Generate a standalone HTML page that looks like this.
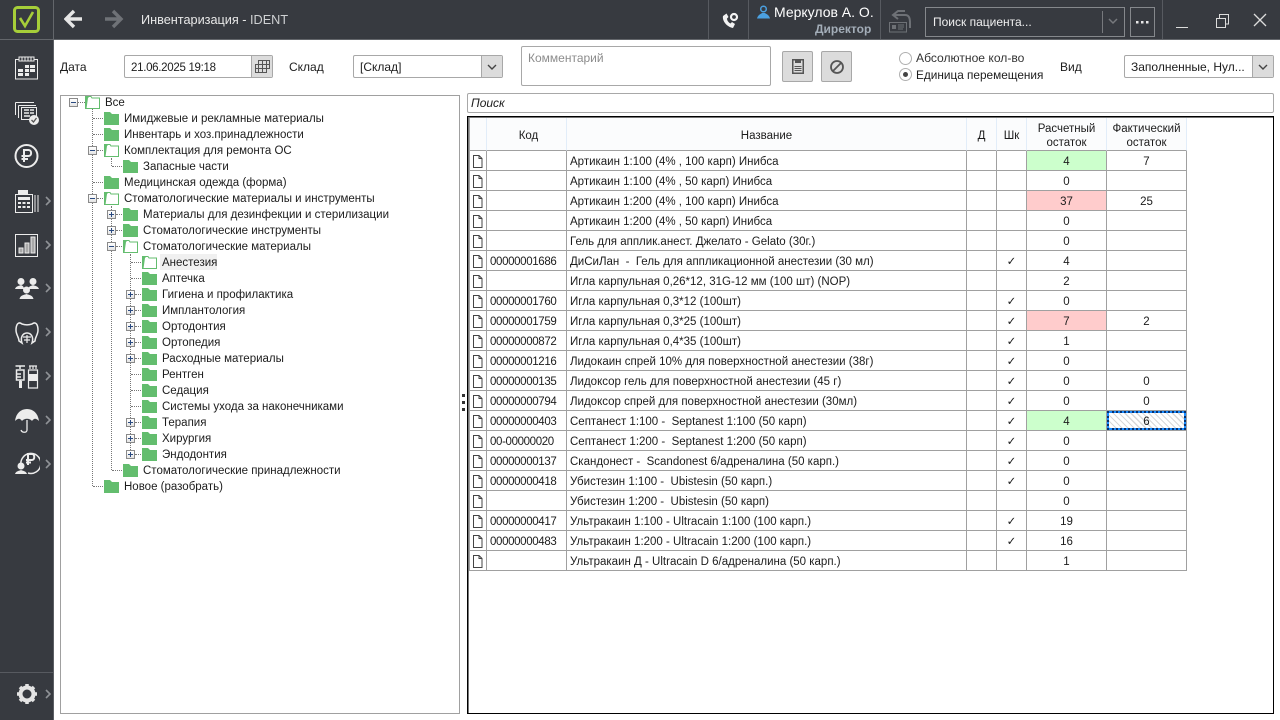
<!DOCTYPE html>
<html><head><meta charset="utf-8"><style>
html,body{margin:0;padding:0;background:#fff}
body{width:1280px;height:720px;overflow:hidden;position:relative;font:11.5px "Liberation Sans",sans-serif;color:#1c1c1c}
.a{position:absolute}
.t{position:absolute;white-space:pre;line-height:16px}
.f{font-size:12px}
#top{left:0;top:0;width:1280px;height:39px;background:#373a40;border-bottom:1px solid #63666b}
#side{left:0;top:40px;width:53px;height:680px;background:#373a40;border-right:1px solid #5c5f64}
.v{position:absolute;top:0;width:1px;height:39px;background:#575a60}
.box{position:absolute;box-sizing:border-box;border:1px solid #a8a8a8;border-radius:2px;background:#fff}
.btn{position:absolute;box-sizing:border-box;background:#dcdcdc;border-left:1px solid #a8a8a8}
.tb{position:absolute;box-sizing:border-box;border:1px solid #a8a8a8;border-radius:2px;background:#dcdcdc;width:31px;height:31px;top:51px}
.ex{position:absolute;width:9px;height:9px;box-sizing:border-box;border:1px solid #8a8a8a;background:linear-gradient(#fff,#e4e4e4)}
.ex:before{content:"";position:absolute;left:1px;top:3px;width:5px;height:1px;background:#2a4a80}
.ex.p:after{content:"";position:absolute;left:3px;top:1px;width:1px;height:5px;background:#2a4a80}
.h{position:absolute;height:1px;border-top:1px dotted #777}
.vl{position:absolute;width:1px;border-left:1px dotted #777}
table{position:absolute;left:469px;top:118px;border-collapse:separate;border-spacing:0;table-layout:fixed;width:718px;border-left:1px solid #a0a0a0}
td,th{box-sizing:border-box;border-right:1px solid #a0a0a0;border-bottom:1px solid #a0a0a0;padding:2px 0 0;height:20px;white-space:pre;overflow:hidden;font-weight:normal;line-height:14px}
th{height:33px;background:#fbfcfd;border-right:1px solid #e2edf9;text-align:center;padding-top:3px}
th.kh{padding-left:4px}
td.n{padding-left:3px}
td.k{letter-spacing:-.36px}
td.c{text-align:center}
td.ic{padding:0}
td.ic svg{display:block;margin:1px 0 0 2px}
td.g{background:#ccffcc}
td.r{background:#ffcccc}
td.s{position:relative;background:repeating-linear-gradient(45deg,#fff 0 3px,#d8d8d8 3px 4.2px)}
td.s:before{content:"";position:absolute;left:0;top:0;right:0;bottom:0;border:2px solid #1a8cff}
td.s:after{content:"";position:absolute;left:0;top:0;right:0;bottom:0;border:2px dotted #06306e}
</style></head><body>
<svg width="0" height="0" style="position:absolute"><defs>
<symbol id="fc" viewBox="0 0 15 13"><path d="M0 13V0H6L8 2H15V13Z" fill="#63bd6e"/></symbol>
<symbol id="fo" viewBox="0 0 15 13"><path d="M0.5 12.5V0.5H6L7 2H14.5V12.5Z" fill="#fff" stroke="#63bd6e"/><path d="M0 13V0H5L3 2 1.5 12.5Z" fill="#63bd6e"/></symbol>
<symbol id="doc" viewBox="0 0 11 13"><path d="M1.5 .5H7L10 3.5V12.5H1.5ZM7 .5V3.5H10" fill="#fff" stroke="#444"/></symbol>
<symbol id="chev" viewBox="0 0 6 10"><path d="M1 1L5 5 1 9" fill="none" stroke="#8f9296" stroke-width="1.6"/></symbol>
</defs></svg>

<div class="a" id="top"></div>
<div class="a" id="side"></div>
<div class="v" style="left:53px;background:#63666b"></div>
<svg class="a" style="left:13px;top:6px" width="27" height="27"><rect x="1.5" y="1.5" width="24" height="24" rx="3" fill="none" stroke="#a6ce39" stroke-width="3"/><path d="M7 12L12 20 20 6" fill="none" stroke="#a6ce39" stroke-width="2.6"/></svg>
<svg class="a" style="left:64px;top:9px" width="60" height="20"><path d="M2 10H18M10 2L2 10 10 18" fill="none" stroke="#e6e6e6" stroke-width="3.4"/><path d="M41 10H57M49 2L57 10 49 18" fill="none" stroke="#6f7277" stroke-width="3.4"/></svg>
<div class="t" style="left:141px;top:12px;font-size:12.7px;color:#e8e8e8">Инвентаризация - <span style="color:#cfd1d3">IDENT</span></div>
<div class="v" style="left:708px"></div><div class="v" style="left:748px"></div><div class="v" style="left:880px"></div><div class="v" style="left:1162px"></div>
<svg class="a" style="left:721px;top:11px" width="20" height="18"><path d="M2 5C1 10 6 16 12 17L14 13 11 11 9.500 12.500C7.500 11.500 6 9.500 6 7.500L7.500 6 5.500 2.500Z" fill="#f2f2f2"/><circle cx="13" cy="6" r="3" fill="none" stroke="#f2f2f2" stroke-width="2.200"/></svg>
<svg class="a" style="left:757px;top:5px" width="13" height="14"><circle cx="6.500" cy="4" r="2.800" fill="none" stroke="#4ba0e0" stroke-width="1.500"/><path d="M0 13.500C1 9.500 4 9 5 8H8C9 9 12 9.500 13 13.500Z" fill="#4ba0e0"/></svg>
<div class="t" style="left:774px;top:4px;font-size:14px;color:#fff">Меркулов А. О.</div>
<div class="t" style="left:815px;top:21px;font-size:12px;font-weight:bold;color:#a3adb8">Директор</div>
<svg class="a" style="left:889px;top:9px" width="24" height="24" fill="none" stroke="#6e7176"><path d="M16 2H9L4 6 9 10M5 6H16C20 6 21 9 21 14V19" stroke-width="2"/><rect x=".5" y="13.500" width="17" height="9.500" fill="#373a40"/><rect x="3" y="16" width="4" height="4" fill="#6e7176" stroke="none"/><path d="M9 16H15M9 18H15M9 20H14"/></svg>
<div class="a" style="left:925px;top:7px;width:200px;height:30px;box-sizing:border-box;border:1px solid #85888c"></div>
<div class="t" style="left:933px;top:14px;font-size:12px;color:#f0f0f0">Поиск пациента...</div>
<div class="a" style="left:1102px;top:11px;width:1px;height:22px;background:#77797d"></div>
<svg class="a" style="left:1108px;top:18px" width="10" height="7"><path d="M1 1L5 5 9 1" fill="none" stroke="#77797d" stroke-width="1.500"/></svg>
<div class="a" style="left:1130px;top:7px;width:25px;height:30px;box-sizing:border-box;border:1px solid #85888c"></div>
<svg class="a" style="left:1135px;top:20px" width="15" height="4" fill="#e8e8e8"><rect x="1" y="1" width="2.500" height="2.500"/><rect x="6" y="1" width="2.500" height="2.500"/><rect x="11" y="1" width="2.500" height="2.500"/></svg>
<svg class="a" style="left:1175px;top:12px" width="95" height="18" fill="none" stroke="#dcdcdc"><path d="M1 15.500H13"/><path d="M41.500 6.500H50.500V15.500H41.500ZM44.500 6V2.500H53.500V12H51"/><path d="M79 2L91 14M91 2L79 14" stroke-width="1.300"/></svg>

<div class="a" style="left:0;top:672px;width:53px;height:1px;background:#575a60"></div>
<svg class="a" style="left:14px;top:55px" width="26" height="425" fill="none" stroke="#ececec" stroke-width="1">
<g><rect x="1.500" y="4.500" width="22" height="19.500"/><path d="M5 2H20V6H5Z" fill="#373a40" stroke="#ececec"/><path d="M8 2V6M11 2V6M14 2V6M17 2V6"/><path d="M11 10H15V13H11ZM16 10H21V13H16ZM4 14H9V17H4ZM11 14H15V17H11ZM16 14H21V17H16ZM4 18H9V21H4ZM11 18H15V21H11Z" fill="#ececec" stroke="none"/></g>
<g transform="translate(0,46)"><path d="M1.500 1.500H20M1.500 1.500V14M4.500 4.500H22M4.500 4.500V17"/><rect x="7.500" y="6.500" width="15" height="12" fill="#373a40"/><path d="M10 9H15M16 9H20M10 12H15M16 12H20M10 15H16" stroke-width="1.500"/><circle cx="20" cy="19" r="5" fill="#ececec" stroke="none"/><path d="M17.500 19L19.500 21 22.500 17" stroke="#555" stroke-width="1.300"/></g>
<g transform="translate(0,89)"><circle cx="12.500" cy="12" r="11" stroke-width="2"/><path d="M10 18V6H14.500C18 6 18 12 14.500 12H7.500M7.500 15H14" stroke-width="2"/></g>
<g transform="translate(0,135)"><rect x="1.500" y="4.500" width="17" height="18"/><path d="M4 0H14V4H4Z" fill="#ececec" stroke="none"/><path d="M4 7H16V10H4Z" stroke="none" fill="#ececec"/><path d="M4 12H7V14H4ZM8.500 12H11.500V14H8.500ZM13 12H16V14H13ZM4 16H7V18H4ZM8.500 16H11.500V18H8.500ZM13 16H16V18H13Z" stroke="none" fill="#ececec"/><path d="M21 5V22M24 5V22"/></g>
<g transform="translate(0,179)"><rect x="1.500" y=".5" width="22" height="22"/><path d="M5 14H9V19H5ZM11 9H15V19H11ZM17 3H21V19H17Z" fill="#a8a8a8" stroke="#ececec"/></g>
<g transform="translate(0,222)" fill="#ececec" stroke="none"><circle cx="7" cy="4.500" r="3.500"/><path d="M1 12C2 9 5 9 7 8 9 9 10 10 10 12Z"/><circle cx="19" cy="4.500" r="3.500"/><path d="M14 12C15 9 17 9 19 8 21 9 24 9 25 12Z"/><circle cx="12.500" cy="13" r="3.500"/><path d="M5.500 22C6.500 18 10 18 12.500 17 15 18 18.500 18 19.500 22Z"/></g>
<g transform="translate(0,266)" stroke-width="1.500"><path d="M8 3C4 0 2 4 2 9 2 14 5 16 5 20L8 22C6 16 9 12 13 12 17 12 20 16 18 22L21 20C21 16 24 14 24 9 24 4 22 0 18 3 15 4 11 4 8 3Z"/><path d="M9 16H17M10 19H16M13 14V22" stroke-width="1.200"/></g>
<g transform="translate(0,310)"><path d="M1.500 1H11M6 1V4M2.500 5H10V15H2.500ZM2.500 9H7M2.500 12H7M6.500 15V19" stroke-width="1.500"/><path d="M5 16H8V23H5Z" fill="#ececec" stroke="none"/><path d="M15 1H23M16 1V4M19 1V4M22 1V4M14.500 5H23.500V23H14.500Z" stroke-width="1.200"/><rect x="14" y="9" width="10" height="7" fill="#ececec" stroke="none"/></g>
<g transform="translate(0,352)"><path d="M1 14C2 6 7 2 13 2 19 2 24 6 25 14 22 11 20 11 18 14 16 11 10 11 8 14 6 11 4 11 1 14Z" fill="#ececec" stroke="none"/><path d="M13 13V23C13 26 8 26 7 23" stroke-width="1.300"/></g>
<g transform="translate(0,396)"><path d="M7 14A10 10 0 1 1 14 22" stroke-width="1.500"/><path d="M14 14V3H18C21 3 21 9 18 9H12M12 11.500H17" stroke-width="2"/><circle cx="7" cy="15" r="3.500" fill="#ececec" stroke="none"/><path d="M1 23C2 20 5 20 7 19 9 20 12 20 13 23Z" fill="#ececec" stroke="none"/></g>
</svg>
<svg class="a" style="left:45px;top:196px" width="6" height="10"><use href="#chev"/></svg>
<svg class="a" style="left:45px;top:240px" width="6" height="10"><use href="#chev"/></svg>
<svg class="a" style="left:45px;top:283px" width="6" height="10"><use href="#chev"/></svg>
<svg class="a" style="left:45px;top:327px" width="6" height="10"><use href="#chev"/></svg>
<svg class="a" style="left:45px;top:371px" width="6" height="10"><use href="#chev"/></svg>
<svg class="a" style="left:45px;top:415px" width="6" height="10"><use href="#chev"/></svg>
<svg class="a" style="left:45px;top:459px" width="6" height="10"><use href="#chev"/></svg>
<svg class="a" style="left:45px;top:689px" width="6" height="10"><use href="#chev"/></svg>
<svg class="a" style="left:16px;top:683px" width="22" height="22"><circle cx="11" cy="11" r="6.500" fill="none" stroke="#e4e4e4" stroke-width="4"/><path d="M11 1V21M1 11H21M4 4L18 18M18 4L4 18" stroke="#e4e4e4" stroke-width="3.500" stroke-dasharray="3.500 13 3.500 0"/></svg>

<div class="t f" style="left:60px;top:59px">Дата</div>
<div class="box" style="left:124px;top:55px;width:149px;height:23px"></div>
<div class="t" style="left:131px;top:60px;letter-spacing:-.3px">21.06.2025 19:18</div>
<div class="btn" style="left:251px;top:56px;width:21px;height:21px"></div>
<svg class="a" style="left:255px;top:60px" width="15" height="13" fill="none" stroke="#555"><path d="M3.500 .5H14.500V8.500H11.500V12.500H.5V4.500H3.500ZM.5 8.500H11.500M3.500 4.500H14.500M3.500 .5V12.500M7.500 .5V12.500M11.500 .5V8.500"/></svg>
<div class="t f" style="left:289px;top:59px">Склад</div>
<div class="box" style="left:353px;top:55px;width:150px;height:23px"></div>
<div class="t f" style="left:360px;top:59px">[Склад]</div>
<div class="btn" style="left:481px;top:56px;width:21px;height:21px"></div>
<svg class="a" style="left:487px;top:64px" width="10" height="7"><path d="M1 1L5 5 9 1" fill="none" stroke="#444" stroke-width="1.400"/></svg>
<div class="box" style="left:521px;top:46px;width:250px;height:40px"></div>
<div class="t f" style="left:528px;top:50px;color:#8c8c8c">Комментарий</div>
<div class="tb" style="left:782px"><svg class="a" style="left:9px;top:7px" width="12" height="16" fill="none" stroke="#555"><path d="M.75 .75H11.250V14.250H.75Z" stroke-width="1.500"/><path d="M3 1H9V4H3Z" fill="#555" stroke="none"/><path d="M2.500 7.500H9.500M2.500 9.500H9.500M2.500 11.500H9.500"/></svg></div>
<div class="tb" style="left:821px"><svg class="a" style="left:7px;top:7px" width="16" height="16" fill="none" stroke="#555" stroke-width="1.800"><circle cx="8" cy="8" r="6"/><path d="M4 12L12 4"/></svg></div>
<svg class="a" style="left:898px;top:51px" width="16" height="32"><circle cx="7.500" cy="7.500" r="6" fill="#fff" stroke="#b0b0b0"/><circle cx="7.500" cy="23.500" r="6" fill="#fff" stroke="#b0b0b0"/><circle cx="7.500" cy="23.500" r="2.500" fill="#444"/></svg>
<div class="t" style="left:916px;top:50px;font-size:12.1px;color:#333">Абсолютное кол-во</div>
<div class="t" style="left:916px;top:67px;font-size:11.8px">Единица перемещения</div>
<div class="t f" style="left:1060px;top:59px">Вид</div>
<div class="box" style="left:1124px;top:55px;width:150px;height:23px"></div>
<div class="t f" style="left:1131px;top:59px">Заполненные, Нул...</div>
<div class="btn" style="left:1252px;top:56px;width:21px;height:21px"></div>
<svg class="a" style="left:1258px;top:64px" width="10" height="7"><path d="M1 1L5 5 9 1" fill="none" stroke="#444" stroke-width="1.400"/></svg>

<div class="a" id="tree" style="left:60px;top:95px;width:400px;height:619px;box-sizing:border-box;border:1px solid #a0a0a0"></div>
<div class="vl" style="left:92px;top:108px;height:378px"></div>
<div class="vl" style="left:111px;top:158px;height:8px"></div>
<div class="vl" style="left:111px;top:206px;height:264px"></div>
<div class="vl" style="left:130px;top:254px;height:200px"></div>
<div class="h" style="left:78px;top:102px;width:7px"></div>
<div class="h" style="left:93px;top:118px;width:10px"></div><div class="h" style="left:93px;top:134px;width:10px"></div><div class="h" style="left:97px;top:150px;width:6px"></div><div class="h" style="left:112px;top:166px;width:10px"></div><div class="h" style="left:93px;top:182px;width:10px"></div><div class="h" style="left:97px;top:198px;width:6px"></div><div class="h" style="left:116px;top:214px;width:6px"></div><div class="h" style="left:116px;top:230px;width:6px"></div><div class="h" style="left:116px;top:246px;width:6px"></div>
<div class="h" style="left:131px;top:262px;width:10px"></div><div class="h" style="left:131px;top:278px;width:10px"></div><div class="h" style="left:135px;top:294px;width:6px"></div><div class="h" style="left:135px;top:310px;width:6px"></div><div class="h" style="left:135px;top:326px;width:6px"></div><div class="h" style="left:135px;top:342px;width:6px"></div><div class="h" style="left:135px;top:358px;width:6px"></div><div class="h" style="left:131px;top:374px;width:10px"></div><div class="h" style="left:131px;top:390px;width:10px"></div><div class="h" style="left:131px;top:406px;width:10px"></div><div class="h" style="left:135px;top:422px;width:6px"></div><div class="h" style="left:135px;top:438px;width:6px"></div><div class="h" style="left:135px;top:454px;width:6px"></div><div class="h" style="left:112px;top:470px;width:10px"></div><div class="h" style="left:93px;top:486px;width:10px"></div>
<div class="ex" style="left:69px;top:98px"></div><div class="ex" style="left:88px;top:146px"></div><div class="ex" style="left:88px;top:194px"></div><div class="ex p" style="left:107px;top:210px"></div><div class="ex p" style="left:107px;top:226px"></div><div class="ex" style="left:107px;top:242px"></div>
<div class="ex p" style="left:126px;top:290px"></div><div class="ex p" style="left:126px;top:306px"></div><div class="ex p" style="left:126px;top:322px"></div><div class="ex p" style="left:126px;top:338px"></div><div class="ex p" style="left:126px;top:354px"></div><div class="ex p" style="left:126px;top:418px"></div><div class="ex p" style="left:126px;top:434px"></div><div class="ex p" style="left:126px;top:450px"></div>
<svg class="a" style="left:85px;top:96px" width="15" height="13"><use href="#fo"/></svg>
<svg class="a" style="left:104px;top:112px" width="15" height="13"><use href="#fc"/></svg>
<svg class="a" style="left:104px;top:128px" width="15" height="13"><use href="#fc"/></svg>
<svg class="a" style="left:104px;top:144px" width="15" height="13"><use href="#fo"/></svg>
<svg class="a" style="left:123px;top:160px" width="15" height="13"><use href="#fc"/></svg>
<svg class="a" style="left:104px;top:176px" width="15" height="13"><use href="#fc"/></svg>
<svg class="a" style="left:104px;top:192px" width="15" height="13"><use href="#fo"/></svg>
<svg class="a" style="left:123px;top:208px" width="15" height="13"><use href="#fc"/></svg>
<svg class="a" style="left:123px;top:224px" width="15" height="13"><use href="#fc"/></svg>
<svg class="a" style="left:123px;top:240px" width="15" height="13"><use href="#fo"/></svg>
<svg class="a" style="left:142px;top:256px" width="15" height="13"><use href="#fo"/></svg>
<svg class="a" style="left:142px;top:272px" width="15" height="13"><use href="#fc"/></svg>
<svg class="a" style="left:142px;top:288px" width="15" height="13"><use href="#fc"/></svg>
<svg class="a" style="left:142px;top:304px" width="15" height="13"><use href="#fc"/></svg>
<svg class="a" style="left:142px;top:320px" width="15" height="13"><use href="#fc"/></svg>
<svg class="a" style="left:142px;top:336px" width="15" height="13"><use href="#fc"/></svg>
<svg class="a" style="left:142px;top:352px" width="15" height="13"><use href="#fc"/></svg>
<svg class="a" style="left:142px;top:368px" width="15" height="13"><use href="#fc"/></svg>
<svg class="a" style="left:142px;top:384px" width="15" height="13"><use href="#fc"/></svg>
<svg class="a" style="left:142px;top:400px" width="15" height="13"><use href="#fc"/></svg>
<svg class="a" style="left:142px;top:416px" width="15" height="13"><use href="#fc"/></svg>
<svg class="a" style="left:142px;top:432px" width="15" height="13"><use href="#fc"/></svg>
<svg class="a" style="left:142px;top:448px" width="15" height="13"><use href="#fc"/></svg>
<svg class="a" style="left:123px;top:464px" width="15" height="13"><use href="#fc"/></svg>
<svg class="a" style="left:104px;top:480px" width="15" height="13"><use href="#fc"/></svg>
<div class="a" style="left:160px;top:254px;width:57px;height:16px;background:#f0f0f0"></div>
<div class="a" style="left:0;top:1px">
<div class="t" style="left:105px;top:94px">Все</div>
<div class="t" style="left:124px;top:110px">Имиджевые и рекламные материалы</div>
<div class="t" style="left:124px;top:126px">Инвентарь и хоз.принадлежности</div>
<div class="t" style="left:124px;top:142px">Комплектация для ремонта ОС</div>
<div class="t" style="left:143px;top:158px">Запасные части</div>
<div class="t" style="left:124px;top:174px">Медицинская одежда (форма)</div>
<div class="t" style="left:124px;top:190px">Стоматологические материалы и инструменты</div>
<div class="t" style="left:143px;top:206px">Материалы для дезинфекции и стерилизации</div>
<div class="t" style="left:143px;top:222px">Стоматологические инструменты</div>
<div class="t" style="left:143px;top:238px">Стоматологические материалы</div>
<div class="t" style="left:162px;top:254px">Анестезия</div>
<div class="t" style="left:162px;top:270px">Аптечка</div>
<div class="t" style="left:162px;top:286px">Гигиена и профилактика</div>
<div class="t" style="left:162px;top:302px">Имплантология</div>
<div class="t" style="left:162px;top:318px">Ортодонтия</div>
<div class="t" style="left:162px;top:334px">Ортопедия</div>
<div class="t" style="left:162px;top:350px">Расходные материалы</div>
<div class="t" style="left:162px;top:366px">Рентген</div>
<div class="t" style="left:162px;top:382px">Седация</div>
<div class="t" style="left:162px;top:398px">Системы ухода за наконечниками</div>
<div class="t" style="left:162px;top:414px">Терапия</div>
<div class="t" style="left:162px;top:430px">Хирургия</div>
<div class="t" style="left:162px;top:446px">Эндодонтия</div>
<div class="t" style="left:143px;top:462px">Стоматологические принадлежности</div>
<div class="t" style="left:124px;top:478px">Новое (разобрать)</div>
</div>

<svg class="a" style="left:462px;top:394px" width="3" height="17" fill="#333"><rect y="0" width="3" height="3"/><rect y="7" width="3" height="3"/><rect y="14" width="3" height="3"/></svg>

<div class="box" style="left:467px;top:93px;width:807px;height:20px"></div>
<div class="t f" style="left:471px;top:95px;font-style:italic">Поиск</div>
<div class="a" style="left:467px;top:116px;width:807px;height:598px;box-sizing:border-box;border:1px solid #000;box-shadow:inset 1px 1px 0 #777"></div>

<table>
<colgroup><col style="width:17px"><col style="width:80px"><col style="width:400px"><col style="width:30px"><col style="width:30px"><col style="width:80px"><col style="width:80px"></colgroup>
<tr><th></th><th class="kh">Код</th><th>Название</th><th>Д</th><th>Шк</th><th>Расчетный<br>остаток</th><th>Фактический<br>остаток</th></tr>
<tr><td class="ic"><svg width="11" height="13"><use href="#doc"/></svg></td><td class="n"></td><td class="n">Артикаин 1:100 (4% , 100 карп) Инибса</td><td></td><td></td><td class="c g">4</td><td class="c">7</td></tr>
<tr><td class="ic"><svg width="11" height="13"><use href="#doc"/></svg></td><td class="n"></td><td class="n">Артикаин 1:100 (4% , 50 карп) Инибса</td><td></td><td></td><td class="c">0</td><td class="c"></td></tr>
<tr><td class="ic"><svg width="11" height="13"><use href="#doc"/></svg></td><td class="n"></td><td class="n">Артикаин 1:200 (4% , 100 карп) Инибса</td><td></td><td></td><td class="c r">37</td><td class="c">25</td></tr>
<tr><td class="ic"><svg width="11" height="13"><use href="#doc"/></svg></td><td class="n"></td><td class="n">Артикаин 1:200 (4% , 50 карп) Инибса</td><td></td><td></td><td class="c">0</td><td class="c"></td></tr>
<tr><td class="ic"><svg width="11" height="13"><use href="#doc"/></svg></td><td class="n"></td><td class="n">Гель для апплик.анест. Джелато - Gelato (30г.)</td><td></td><td></td><td class="c">0</td><td class="c"></td></tr>
<tr><td class="ic"><svg width="11" height="13"><use href="#doc"/></svg></td><td class="n k">00000001686</td><td class="n">ДиСиЛан  -  Гель для аппликационной анестезии (30 мл)</td><td></td><td class="c">✓</td><td class="c">4</td><td class="c"></td></tr>
<tr><td class="ic"><svg width="11" height="13"><use href="#doc"/></svg></td><td class="n"></td><td class="n">Игла карпульная 0,26*12, 31G-12 мм (100 шт) (NOP)</td><td></td><td></td><td class="c">2</td><td class="c"></td></tr>
<tr><td class="ic"><svg width="11" height="13"><use href="#doc"/></svg></td><td class="n k">00000001760</td><td class="n">Игла карпульная 0,3*12 (100шт)</td><td></td><td class="c">✓</td><td class="c">0</td><td class="c"></td></tr>
<tr><td class="ic"><svg width="11" height="13"><use href="#doc"/></svg></td><td class="n k">00000001759</td><td class="n">Игла карпульная 0,3*25 (100шт)</td><td></td><td class="c">✓</td><td class="c r">7</td><td class="c">2</td></tr>
<tr><td class="ic"><svg width="11" height="13"><use href="#doc"/></svg></td><td class="n k">00000000872</td><td class="n">Игла карпульная 0,4*35 (100шт)</td><td></td><td class="c">✓</td><td class="c">1</td><td class="c"></td></tr>
<tr><td class="ic"><svg width="11" height="13"><use href="#doc"/></svg></td><td class="n k">00000001216</td><td class="n">Лидокаин спрей 10% для поверхностной анестезии (38г)</td><td></td><td class="c">✓</td><td class="c">0</td><td class="c"></td></tr>
<tr><td class="ic"><svg width="11" height="13"><use href="#doc"/></svg></td><td class="n k">00000000135</td><td class="n">Лидоксор гель для поверхностной анестезии (45 г)</td><td></td><td class="c">✓</td><td class="c">0</td><td class="c">0</td></tr>
<tr><td class="ic"><svg width="11" height="13"><use href="#doc"/></svg></td><td class="n k">00000000794</td><td class="n">Лидоксор спрей для поверхностной анестезии (30мл)</td><td></td><td class="c">✓</td><td class="c">0</td><td class="c">0</td></tr>
<tr><td class="ic"><svg width="11" height="13"><use href="#doc"/></svg></td><td class="n k">00000000403</td><td class="n">Септанест 1:100 -  Septanest 1:100 (50 карп)</td><td></td><td class="c">✓</td><td class="c g">4</td><td class="c s">6</td></tr>
<tr><td class="ic"><svg width="11" height="13"><use href="#doc"/></svg></td><td class="n k">00-00000020</td><td class="n">Септанест 1:200 -  Septanest 1:200 (50 карп)</td><td></td><td class="c">✓</td><td class="c">0</td><td class="c"></td></tr>
<tr><td class="ic"><svg width="11" height="13"><use href="#doc"/></svg></td><td class="n k">00000000137</td><td class="n">Скандонест -  Scandonest 6/адреналина (50 карп.)</td><td></td><td class="c">✓</td><td class="c">0</td><td class="c"></td></tr>
<tr><td class="ic"><svg width="11" height="13"><use href="#doc"/></svg></td><td class="n k">00000000418</td><td class="n">Убистезин 1:100 -  Ubistesin (50 карп.)</td><td></td><td class="c">✓</td><td class="c">0</td><td class="c"></td></tr>
<tr><td class="ic"><svg width="11" height="13"><use href="#doc"/></svg></td><td class="n"></td><td class="n">Убистезин 1:200 -  Ubistesin (50 карп)</td><td></td><td></td><td class="c">0</td><td class="c"></td></tr>
<tr><td class="ic"><svg width="11" height="13"><use href="#doc"/></svg></td><td class="n k">00000000417</td><td class="n">Ультракаин 1:100 - Ultracain 1:100 (100 карп.)</td><td></td><td class="c">✓</td><td class="c">19</td><td class="c"></td></tr>
<tr><td class="ic"><svg width="11" height="13"><use href="#doc"/></svg></td><td class="n k">00000000483</td><td class="n">Ультракаин 1:200 - Ultracain 1:200 (100 карп.)</td><td></td><td class="c">✓</td><td class="c">16</td><td class="c"></td></tr>
<tr><td class="ic"><svg width="11" height="13"><use href="#doc"/></svg></td><td class="n"></td><td class="n">Ультракаин Д - Ultracain D 6/адреналина (50 карп.)</td><td></td><td></td><td class="c">1</td><td class="c"></td></tr>
</table>
</body></html>
